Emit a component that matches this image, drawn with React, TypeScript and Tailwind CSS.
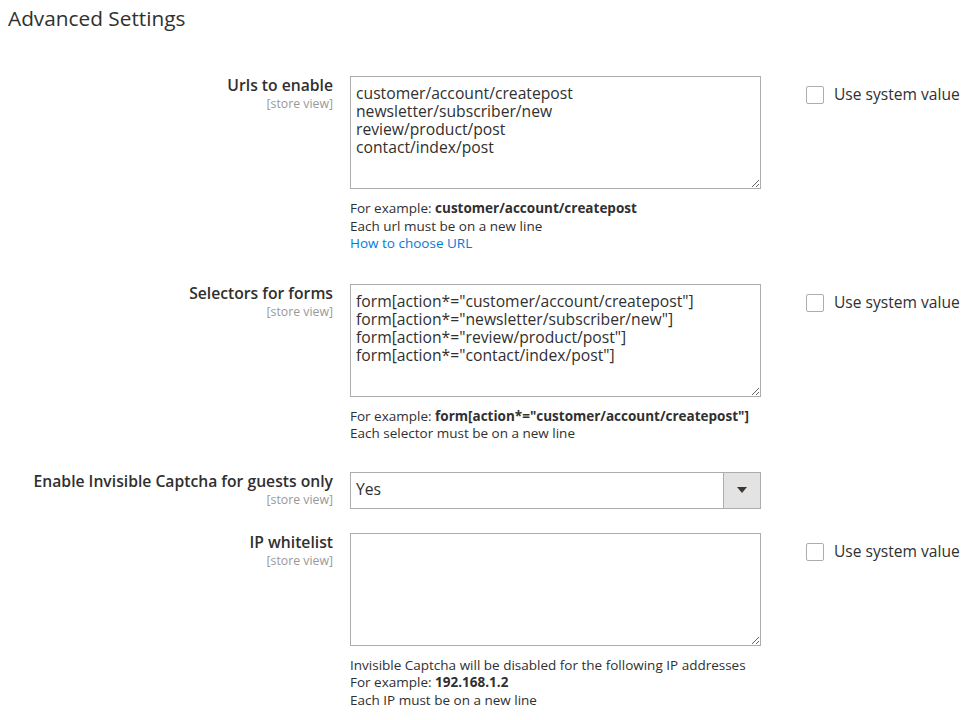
import React from "react";

const font = { fontFamily: '"Open Sans", "Liberation Sans", sans-serif' };

function Label({ title }: { title: string }) {
  return (
    <div className="w-[333px] shrink-0 text-right">
      <div className="text-[15.7px] font-semibold leading-[18px] text-[#303030]">{title}</div>
      <div className="text-[12.3px] leading-[14px] text-[#999] mt-[3px]">[store view]</div>
    </div>
  );
}

function SystemValue() {
  return (
    <label className="flex items-center gap-[10px] ml-[45px] mt-[10px] h-[18px] text-[15.6px] text-[#303030]">
      <span className="w-[18px] h-[18px] border border-[#adadad] rounded-[2px] bg-white shrink-0" />
      <span className="leading-[18px] -mt-[2px]">Use system value</span>
    </label>
  );
}

function Area({ value }: { value: string }) {
  return (
    <textarea
      readOnly
      defaultValue={value}
      className="block w-[411px] h-[113px] border border-[#adadad] px-[5px] py-[7px] text-[15.7px] leading-[18px] text-[#303030] outline-none"
      style={font}
    />
  );
}

export default function App() {
  return (
    <div className="min-h-[720px] bg-white text-[#303030]" style={font}>
      <h2 className="pl-[8px] pt-[4px] text-[20.8px] leading-[28px] text-[#303030]">Advanced Settings</h2>

      <div className="mt-[44px] flex flex-col">
        {/* Urls to enable */}
        <div className="flex">
          <Label title="Urls to enable" />
          <div className="ml-[17px]">
            <Area value={"customer/account/createpost\nnewsletter/subscriber/new\nreview/product/post\ncontact/index/post"} />
            <div className="mt-[11px] text-[13.5px] leading-[17.5px]">
              <div>
                For example: <b className="font-bold">customer/account/createpost</b>
              </div>
              <div>Each url must be on a new line</div>
              <a className="text-[#007bdb]" href="#">How to choose URL</a>
            </div>
          </div>
          <SystemValue />
        </div>

        {/* Selectors */}
        <div className="flex mt-[31px]">
          <Label title="Selectors for forms" />
          <div className="ml-[17px]">
            <Area
              value={
                'form[action*="customer/account/createpost"]\nform[action*="newsletter/subscriber/new"]\nform[action*="review/product/post"]\nform[action*="contact/index/post"]'
              }
            />
            <div className="mt-[11px] text-[13.5px] leading-[17.5px]">
              <div>
                For example: <b className="font-bold">form[action*="customer/account/createpost"]</b>
              </div>
              <div>Each selector must be on a new line</div>
            </div>
          </div>
          <SystemValue />
        </div>

        {/* Enable for guests */}
        <div className="flex mt-[29px]">
          <Label title="Enable Invisible Captcha for guests only" />
          <div className="ml-[17px]">
            <div className="flex w-[411px] h-[37px] border border-[#adadad] bg-white">
              <div className="flex-1 flex items-center pl-[5px] text-[15.7px]">Yes</div>
              <div className="w-[37px] bg-[#e3e3e3] border-l border-[#adadad] flex items-center justify-center">
                <svg width="10" height="6" viewBox="0 0 10 6">
                  <path d="M0 0h10L5 6z" fill="#41362f" />
                </svg>
              </div>
            </div>
          </div>
        </div>

        {/* IP whitelist */}
        <div className="flex mt-[24px]">
          <Label title="IP whitelist" />
          <div className="ml-[17px]">
            <Area value="" />
            <div className="mt-[11px] text-[13.5px] leading-[17.5px]">
              <div>Invisible Captcha will be disabled for the following IP addresses</div>
              <div>
                For example: <b className="font-bold">192.168.1.2</b>
              </div>
              <div>Each IP must be on a new line</div>
            </div>
          </div>
          <SystemValue />
        </div>
      </div>
    </div>
  );
}
